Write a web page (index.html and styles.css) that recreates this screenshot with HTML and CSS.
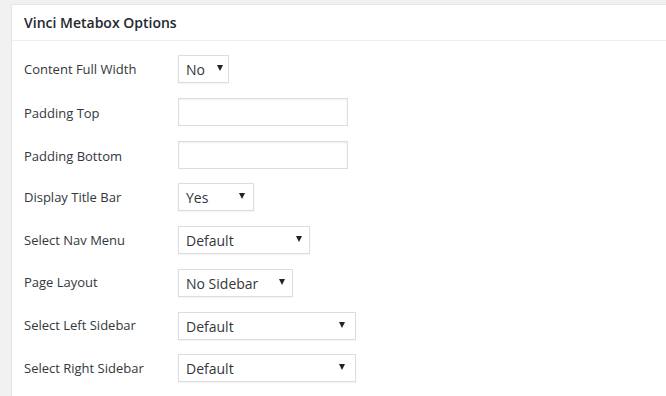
FILE: index.html
```html
<!DOCTYPE html>
<html lang="en">
<head>
<meta charset="utf-8">
<title>Vinci Metabox Options</title>
<link rel="stylesheet" href="styles.css">
</head>
<body>
<div class="postbox">
  <h2 class="hndle">Vinci Metabox Options</h2>
  <div class="inside">
    <div class="row">
      <label class="lbl">Content Full Width</label>
      <div class="sel sel-no"><span>No</span><i class="arr"></i></div>
    </div>
    <div class="row row-input">
      <label class="lbl">Padding Top</label>
      <div class="txt"></div>
    </div>
    <div class="row row-input">
      <label class="lbl">Padding Bottom</label>
      <div class="txt"></div>
    </div>
    <div class="row">
      <label class="lbl">Display Title Bar</label>
      <div class="sel sel-yes"><span>Yes</span><i class="arr"></i></div>
    </div>
    <div class="row">
      <label class="lbl">Select Nav Menu</label>
      <div class="sel sel-nav"><span>Default</span><i class="arr"></i></div>
    </div>
    <div class="row">
      <label class="lbl">Page Layout</label>
      <div class="sel sel-layout"><span>No Sidebar</span><i class="arr"></i></div>
    </div>
    <div class="row">
      <label class="lbl">Select Left Sidebar</label>
      <div class="sel sel-wide"><span>Default</span><i class="arr"></i></div>
    </div>
    <div class="row">
      <label class="lbl">Select Right Sidebar</label>
      <div class="sel sel-wide"><span>Default</span><i class="arr"></i></div>
    </div>
  </div>
</div>
</body>
</html>
```
FILE: styles.css
```css
html, body {
  margin: 0;
  padding: 0;
  background: #f1f1f1;
  overflow: hidden;
  font-family: "Open Sans", "Noto Sans", sans-serif;
}
body {
  width: 666px;
  height: 396px;
}
.postbox {
  box-sizing: border-box;
  margin: 4px 0 0 11px;
  width: 655px;
  height: 392px;
  background: #fff;
  border: 1px solid #e5e5e5;
  border-right: 0;
  border-bottom: 0;
}
.hndle {
  margin: 0;
  padding: 8px 12px;
  height: 19px;
  line-height: 19px;
  font-size: 14px;
  font-weight: 600;
  color: #23282d;
  border-bottom: 1px solid #eee;
}
.inside {
  padding: 14px 12px 0 12px;
  display: flex;
  flex-direction: column;
  gap: 14.75px;
}
.row {
  display: flex;
  align-items: center;
  height: 28px;
}
.lbl {
  width: 154px;
  flex: none;
  font-size: 13px;
  color: #32373c;
  line-height: 18px;
  padding-bottom: 1px;
}
.row-input .lbl {
  padding-top: 3px;
  padding-bottom: 0;
}
.txt {
  box-sizing: border-box;
  width: 170px;
  height: 28px;
  border: 1px solid #ddd;
  box-shadow: inset 0 1px 2px rgba(0,0,0,.07);
  background: #fff;
}
.sel {
  box-sizing: border-box;
  height: 28px;
  border: 1px solid #ddd;
  background: #fff;
  box-shadow: 0 1px 1px rgba(0,0,0,.04);
  display: flex;
  align-items: center;
  justify-content: space-between;
  padding: 0 6px 0 7px;
  font-size: 14px;
  color: #32373c;
}
.sel span {
  line-height: 20px;
  padding-top: 2px;
}
.arr {
  width: 0;
  height: 0;
  border-left: 3px solid transparent;
  border-right: 3px solid transparent;
  border-top: 6px solid #222;
  margin-bottom: 2px;
}
.sel-no { width: 51px; padding-right: 5px; }
.sel-yes { width: 76px; padding-right: 8px; }
.sel-nav { width: 132px; padding-right: 7px; }
.sel-layout { width: 115px; padding-right: 7px; }
.sel-wide { width: 178px; padding-right: 10px; }
```
